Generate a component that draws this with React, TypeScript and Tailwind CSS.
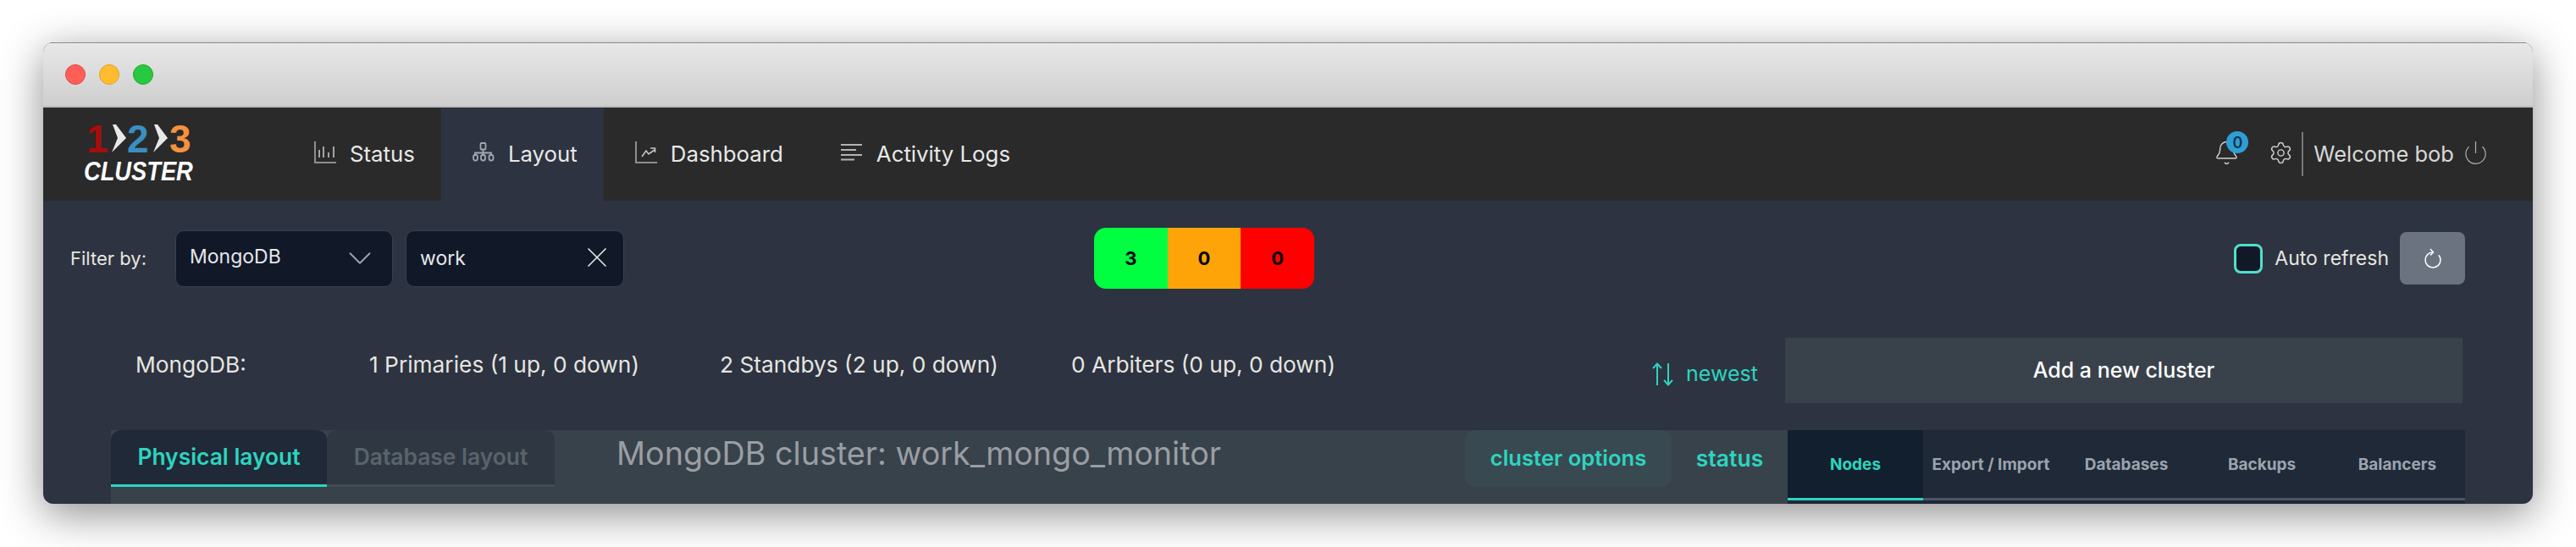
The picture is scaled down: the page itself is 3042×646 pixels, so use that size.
import { ChevronDown, X, Settings, Power, Bell } from 'lucide-react'

const font = { fontFamily: 'Inter, "Noto Sans", sans-serif' }
const logoFont = { fontFamily: '"Liberation Sans", sans-serif' }

function StatusIcon() {
  return (
    <svg className="mb-[4px]" width="26" height="26" viewBox="0 0 26 26" fill="none" stroke="#c4c4c4" strokeWidth="1.6">
      <path d="M1 0v25h25" stroke="#8e8e8e" strokeWidth="2" />
      <path d="M6 10v9M11 6v13M17 13v6M23 6v13" />
    </svg>
  )
}

function LayoutIcon() {
  return (
    <svg className="mb-[4px]" width="26" height="26" viewBox="0 0 26 26" fill="none" stroke="#a3a8b0" strokeWidth="1.8">
      <rect x="9.5" y="2" width="6" height="7.5" rx="1" />
      <path d="M12.5 9.5V16M3 16v-2.5h19V16" />
      <rect x="1" y="16" width="5" height="6.5" rx="2.2" />
      <rect x="10" y="16" width="5" height="6.5" rx="2.2" />
      <rect x="19.5" y="16" width="5" height="6.5" rx="2.2" />
    </svg>
  )
}

function DashboardIcon() {
  return (
    <svg className="mb-[4px]" width="26" height="26" viewBox="0 0 26 26" fill="none" stroke="#c4c4c4" strokeWidth="1.6">
      <path d="M1 0v25h25" stroke="#8e8e8e" strokeWidth="2" />
      <path d="M8 18l5-7 3 4 7-5M18 8h5.5v5" />
    </svg>
  )
}

function LogsIcon() {
  return (
    <svg className="mb-[4px]" width="26" height="26" viewBox="0 0 26 26" fill="none" stroke="#b4b4b4" strokeWidth="1.8">
      <path d="M0 4h25M0 10h18M0 16h25M0 21.5h16" />
    </svg>
  )
}

function RefreshIcon() {
  return (
    <svg width="22" height="24" viewBox="0 0 22 24" fill="none" stroke="#fff" strokeWidth="1.5">
      <path d="M11 5a9 9 0 1 0 9 9c0-2.2-.8-4.2-2.2-5.8" />
      <path d="M8 1l3.5 4L8 8.5" />
    </svg>
  )
}

function SortIcon() {
  return (
    <svg width="26" height="28" viewBox="0 0 26 28" fill="none" stroke="#2dd4bf" strokeWidth="2">
      <path d="M6 27V1.5M1 7l5-5.5L11 7" />
      <path d="M19 1v25.5M14 21l5 5.5 5-5.5" />
    </svg>
  )
}

function Chevron() {
  return (
    <svg className="shrink-0" width="17" height="33" viewBox="0 0 17 33" fill="#e8e8e8">
      <path d="M1 0h4l12 16L0 33l7-17z" />
    </svg>
  )
}

function NavItem({ icon, label, active }: { icon: React.ReactNode; label: string; active?: boolean }) {
  return (
    <div className={`flex items-center gap-4 h-full pl-[37px] pr-[31px] ${active ? 'bg-[#2d3340]' : ''}`}>
      {icon}
      <span className="text-[25.8px] text-[#e8e8e8]">{label}</span>
    </div>
  )
}

export default function App() {
  return (
    <div className="w-[3042px] h-[646px] bg-white overflow-hidden pt-[50px] pl-[51px]" style={font}>
      <div className="w-[2940px] h-[545px] rounded-[12px] overflow-hidden flex flex-col bg-[#2d3340] shadow-[0_12px_50px_rgba(0,0,0,0.45)]">
        <div className="h-[77px] shrink-0 flex items-center gap-[16px] pl-[26px] bg-gradient-to-b from-[#e8e8e8] to-[#cecece] border-t border-[#8c8c8c] border-b-2 border-b-[#bcbcbc]">
          <div className="w-[24px] h-[24px] rounded-full bg-[#ff5f57] border border-[#e0443e]" />
          <div className="w-[24px] h-[24px] rounded-full bg-[#febc2e] border border-[#dea123]" />
          <div className="w-[24px] h-[24px] rounded-full bg-[#28c840] border border-[#1aab29]" />
        </div>

        <div className="h-[110px] shrink-0 flex items-center bg-[#2a2a2a]">
          <div className="w-[283px] h-full shrink-0 pl-[48px] pt-[20px]">
            <div className="flex items-center h-[33px] leading-none font-bold text-[46px]" style={logoFont}>
              <span className="text-[#a80c0c] w-[33px] pl-[3px] shrink-0">1</span>
              <Chevron />
              <span className="text-[#3a8fc2] w-[32px] pl-[1px] shrink-0">2</span>
              <Chevron />
              <span className="text-[#f5923e] pl-[2px]">3</span>
            </div>
            <div className="mt-[9px] text-[31px] leading-[28px] font-bold italic text-white origin-left scale-x-[0.88]" style={logoFont}>
              CLUSTER
            </div>
          </div>
          <NavItem icon={<StatusIcon />} label="Status" />
          <NavItem icon={<LayoutIcon />} label="Layout" active />
          <NavItem icon={<DashboardIcon />} label="Dashboard" />
          <NavItem icon={<LogsIcon />} label="Activity Logs" />
          <div className="ml-auto flex items-center pr-[52px] text-[#d8d8d8]">
            <div className="relative w-[31px] h-[31px] -mt-[3px]">
              <Bell size={31} strokeWidth={1.1} color="#d0d0d0" />
              <span className="absolute -top-[10px] left-[15px] w-[26px] h-[26px] rounded-full bg-[#2e9fd6] text-[#12324a] text-[18px] font-semibold flex items-center justify-center">0</span>
            </div>
            <Settings size={29} strokeWidth={1.2} color="#d0d0d0" className="ml-[34px] -mt-[3px]" />
            <div className="w-[2px] h-[52px] bg-[#777] ml-[10px] mr-[12px]" />
            <span className="text-[25.5px]">Welcome bob</span>
            <Power size={31} strokeWidth={0.9} color="#b5b5b5" className="ml-[10px] -mt-[4px]" />
          </div>
        </div>

        <div className="flex items-center h-[72px] mt-[32px] pl-[32px] pr-[80px] shrink-0">
          <span className="text-[22px] text-[#e6e6e0] w-[124px]">Filter by:</span>
          <div className="w-[257px] h-[67px] rounded-[10px] bg-[#111827] border border-[#374151] flex items-center justify-between pl-[16px] pr-[15px] text-[23px] text-[#e5e7eb]">
            <span className="-mt-[4px]">MongoDB</span>
            <ChevronDown size={46} strokeWidth={1} color="#9ca3af" />
          </div>
          <div className="ml-[15px] w-[258px] h-[67px] rounded-[10px] bg-[#111827] border border-[#374151] flex items-center justify-between pl-[16px] pr-[11px] text-[23px] text-[#e5e7eb]">
            work
            <X size={40} strokeWidth={1} color="#e5e7eb" className="-mt-[3px]" />
          </div>
          <div className="ml-[555px] w-[260px] h-[72px] rounded-[14px] overflow-hidden flex text-[22px] font-bold text-black">
            <div className="flex-1 bg-[#00ff41] flex items-center justify-center">3</div>
            <div className="flex-1 bg-[#ffa408] flex items-center justify-center">0</div>
            <div className="flex-1 bg-[#ff0000] flex items-center justify-center">0</div>
          </div>
          <div className="ml-auto flex items-center">
            <div className="w-[34px] h-[35px] rounded-[8px] bg-[#111827] border-[3px] border-[#4fe0cf]" />
            <span className="ml-[14px] text-[23px] text-[#e6e6e0]">Auto refresh</span>
            <div className="ml-[13px] w-[77px] h-[62px] rounded-[8px] bg-[#6b7280] flex items-center justify-center">
              <RefreshIcon />
            </div>
          </div>
        </div>

        <div className="flex items-center h-[77px] mt-[58px] ml-[109px] mr-[83px] shrink-0 text-[#e6e6e0] text-[26.3px]">
          <span className="w-[276px] -mt-[14px]">MongoDB:</span>
          <span className="w-[414px] -mt-[14px]">1 Primaries (1 up, 0 down)</span>
          <span className="w-[415px] -mt-[14px]">2 Standbys (2 up, 0 down)</span>
          <span className="-mt-[14px]">0 Arbiters (0 up, 0 down)</span>
          <div className="ml-auto flex items-center pt-[8px] text-[#2dd4bf]">
            <SortIcon />
            <span className="ml-[14px] text-[25px] w-[117px]">newest</span>
          </div>
          <div className="w-[800px] h-[77px] bg-[#39424b] text-white text-[25px] font-medium flex items-center justify-center">Add a new cluster</div>
        </div>

        <div className="flex h-[87px] mt-[32px] ml-[80px] mr-[80px] bg-[#38424b] shrink-0">
          <div className="w-[255px] h-[67px] rounded-t-[12px] bg-[#1f2937] border-b-[3px] border-[#2dd4bf] text-[#2dd4bf] text-[26.4px] font-semibold flex items-center justify-center">Physical layout</div>
          <div className="w-[269px] h-[67px] rounded-t-[12px] bg-[#2f3842] border-b-[3px] border-[#414a55] text-[#5a636c] text-[26.4px] font-semibold flex items-center justify-center">Database layout</div>
          <div className="ml-[73px] h-[54px] flex items-center text-[37.7px] text-[#9a9ea3] whitespace-nowrap">MongoDB cluster: work_mongo_monitor</div>
          <div className="ml-auto w-[244px] h-[67px] rounded-[12px] bg-[#394951] text-[#2dd4bf] text-[25.6px] font-semibold flex items-center justify-center">cluster options</div>
          <div className="w-[137px] h-[67px] text-[#2dd4bf] text-[26.5px] font-semibold flex items-center justify-center">status</div>
          <div className="w-[800px] shrink-0 bg-[#1f2937] h-full">
            <div className="flex h-[83px] border-b-[3px] border-[#4b5563]">
              <div className="w-[160px] h-[83px] shrink-0 pt-[2px] bg-[#111f2e] border-b-[3px] border-[#2dd4bf] text-[#2dd4bf] text-[19px] font-bold flex items-center justify-center">Nodes</div>
              {['Export / Import', 'Databases', 'Backups', 'Balancers'].map(t => (
                <div key={t} className="w-[160px] pt-[2px] text-[#9ca3af] text-[19px] font-bold flex items-center justify-center whitespace-nowrap">{t}</div>
              ))}
            </div>
          </div>
        </div>
      </div>
    </div>
  )
}
